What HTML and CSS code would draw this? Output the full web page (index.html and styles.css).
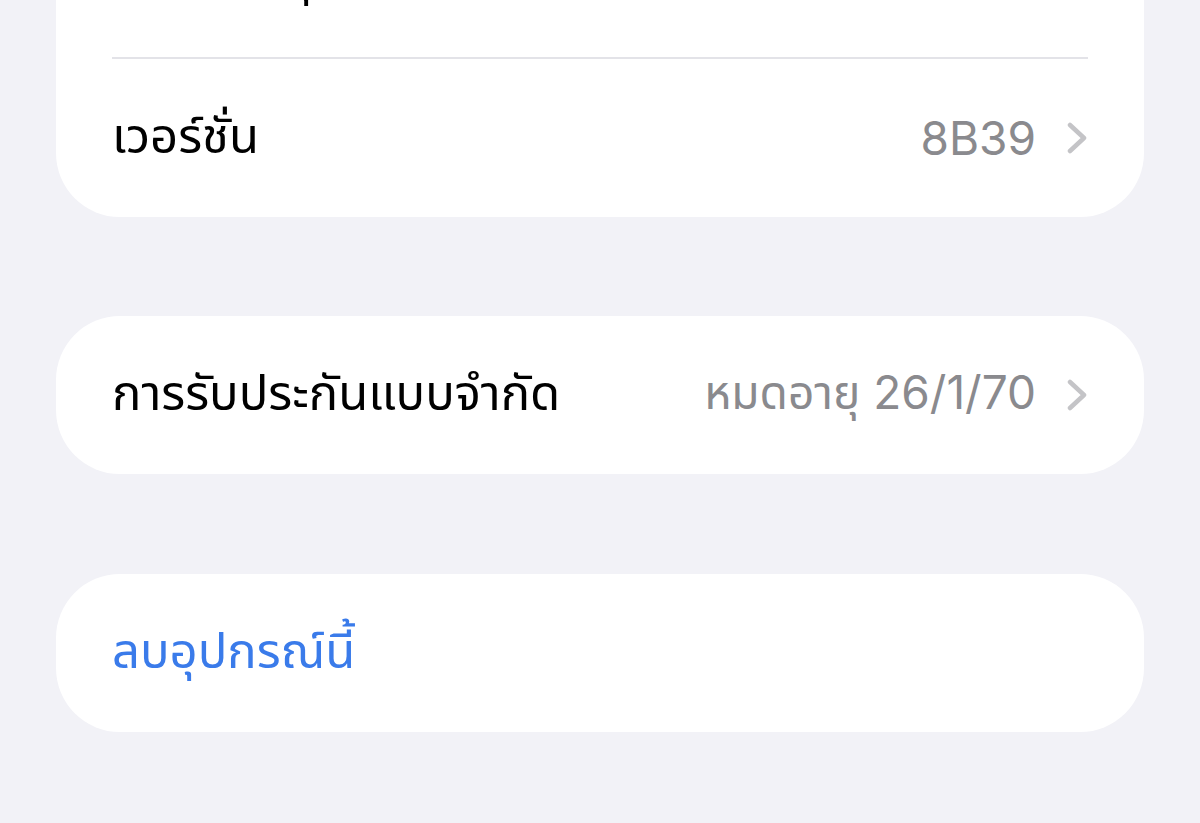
FILE: index.html
```html
<!DOCTYPE html>
<html lang="th">
<head>
  <meta charset="UTF-8">
  <title>เกี่ยวกับ</title>
  <link rel="stylesheet" href="styles.css">
</head>
<body>
  <div class="list">
    <!-- Device info -->
    <div class="card card-first">
      <div class="row">
        <span class="label">หมายเลขรุ่น</span>
      </div>
      <div class="separator"></div>
      <div class="row">
        <span class="label">เวอร์ชั่น</span>
        <span class="value">8B39</span>
        <svg class="chevron" viewBox="0 0 20 32" width="20" height="32">
          <path d="M3 3 L17 16 L3 29" fill="none" stroke="#c4c4c7" stroke-width="4.5" stroke-linecap="round" stroke-linejoin="round"/>
        </svg>
      </div>
    </div>

    <!-- Warranty -->
    <div class="card">
      <div class="row">
        <span class="label">การรับประกันแบบจำกัด</span>
        <span class="value">หมดอายุ 26/1/70</span>
        <svg class="chevron" viewBox="0 0 20 32" width="20" height="32">
          <path d="M3 3 L17 16 L3 29" fill="none" stroke="#c4c4c7" stroke-width="4.5" stroke-linecap="round" stroke-linejoin="round"/>
        </svg>
      </div>
    </div>

    <!-- Remove -->
    <div class="card">
      <div class="row">
        <span class="label action">ลบอุปกรณ์นี้</span>
      </div>
    </div>
  </div>
</body>
</html>
```

FILE: styles.css
```css
body {
  margin: 0;
  padding: 0;
  background: #f2f2f7;
  font-family: Inter, "Noto Sans Thai", "Noto Sans", sans-serif;
  overflow: hidden;
}
.list {
  padding: 0 56px;
}
.card {
  background: #fff;
  border-radius: 64px;
  margin-bottom: 100px;
}
.card-first {
  margin-top: -101px;
  margin-bottom: 99px;
}
.row {
  display: flex;
  align-items: center;
  height: 158px;
  padding: 0 57px 0 56px;
}
.label {
  flex: 1;
  font-size: 49px;
  color: #000;
  white-space: nowrap;
}
.label.action {
  color: #3a7bea;
}
.value {
  font-size: 46px;
  color: #8a8a8e;
  white-space: nowrap;
}
.chevron {
  margin-left: 31px;
}
.separator {
  height: 2px;
  background: #e3e3e8;
  margin: 0 56px;
}
```
